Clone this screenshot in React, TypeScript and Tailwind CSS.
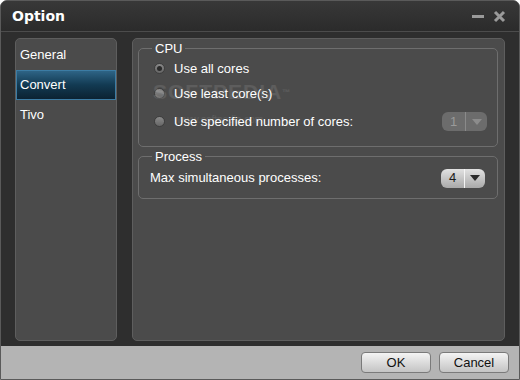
import { useState } from 'react'

const font = { fontFamily: '"Liberation Sans", Arial, sans-serif' }

const navItems = ['General', 'Convert', 'Tivo']

function Radio({ checked }: { checked?: boolean }) {
  return (
    <span className="flex h-[11px] w-[11px] items-center justify-center rounded-full border border-[#3e3e3e] bg-gradient-to-b from-[#8a8a8a] to-[#666]">
      {checked && <span className="h-[5px] w-[5px] rounded-full bg-[#2a2a2a]" />}
    </span>
  )
}

function Dropdown({ value, disabled }: { value: string; disabled?: boolean }) {
  return (
    <div
      className={
        disabled
          ? 'flex h-[19px] w-[45px] overflow-hidden rounded-[6px] bg-[#6c6c6c] text-[13px] text-[#9a9a9a]'
          : 'flex h-[19px] w-[44px] overflow-hidden rounded-[6px] bg-gradient-to-b from-[#e2e2e2] to-[#a9a9a9] text-[13px] text-[#1a1a1a]'
      }
    >
      <span className="flex w-[23px] items-center justify-center">{value}</span>
      <span className={disabled ? 'w-px bg-[#8a8a8a]' : 'w-px bg-[#f4f4f4]'} />
      <span className="flex flex-1 items-center justify-center">
        <svg width="10" height="6" viewBox="0 0 10 6">
          <path d="M0 0h10L5 6z" fill={disabled ? '#8c8c8c' : '#2a2a2a'} />
        </svg>
      </span>
    </div>
  )
}

export default function App() {
  const [active, setActive] = useState('Convert')
  const [cores, setCores] = useState(0)

  return (
    <div style={font} className="relative flex h-[380px] w-[520px] flex-col overflow-hidden rounded-t-[7px] border border-[#5a5a5a] bg-[#2e2e2e] select-none">
      {/* Title bar */}
      <div className="flex h-[31px] shrink-0 items-center border-b border-[#4c4c4c] bg-gradient-to-b from-[#383838] to-[#2b2b2b] pl-[11px] pr-[13px]">
        <span style={{ fontFamily: '"DejaVu Sans", sans-serif' }} className="text-[14px] font-bold text-white">Option</span>
        <div className="ml-auto flex items-center gap-[9px]">
          <span className="mt-[1px] h-[3px] w-[12px] bg-[#9a9a9a]" />
          <svg width="13" height="13" viewBox="0 0 13 13">
            <path d="M2 2l9 9M11 2l-9 9" stroke="#9a9a9a" strokeWidth="3" />
          </svg>
        </div>
      </div>

      {/* Body */}
      <div className="flex flex-1 gap-[15px] pb-[5px] pl-[14px] pr-[14px] pt-[6px]">
        <div className="w-[102px] rounded-[5px] border border-[#5e5e5e] bg-[#4b4b4b] pt-[1px]">
          {navItems.map(n => (
            <div
              key={n}
              onClick={() => setActive(n)}
              className={
                n === active
                  ? 'flex h-[30px] items-center border border-[#3c7ca4] bg-gradient-to-b from-[#2e6486] via-[#123a52] to-[#0b2232] pl-[3px] text-[13px] text-white'
                  : 'flex h-[30px] items-center pl-[4px] text-[13px] text-white'
              }
            >
              {n}
            </div>
          ))}
        </div>

        <div className="flex flex-1 flex-col gap-[2px] rounded-[5px] border border-[#5e5e5e] bg-[#4b4b4b] pl-[5px] pr-[6px] pt-[2px]">
          <fieldset className="rounded-[5px] border border-[#6e6e6e] pb-[9px] pl-[15px] pr-[10px]">
            <legend className="-ml-[2px] px-[3px] text-[13px] leading-[15px] text-white">CPU</legend>
            <div className="flex flex-col">
              {['Use all cores', 'Use least core(s)', 'Use specified number of cores:'].map((t, i) => (
                <div key={t} onClick={() => setCores(i)} className={i === 2 ? 'flex h-[31px] items-center gap-[9px] text-[13px] text-white' : 'flex h-[25px] items-center gap-[9px] text-[13px] text-white'}>
                  <Radio checked={cores === i} />
                  <span>{t}</span>
                  {i === 2 && (
                    <div className="ml-auto">
                      <Dropdown value="1" disabled={cores !== 2} />
                    </div>
                  )}
                </div>
              ))}
            </div>
          </fieldset>

          <fieldset className="rounded-[5px] border border-[#6e6e6e] pb-[6px] pl-[11px] pr-[12px]">
            <legend className="ml-[2px] px-[3px] text-[13px] leading-[15px] text-white">Process</legend>
            <div className="flex h-[28px] items-center text-[13px] text-white">
              <span>Max simultaneous processes:</span>
              <div className="ml-auto">
                <Dropdown value="4" />
              </div>
            </div>
          </fieldset>
        </div>
      </div>

      {/* Footer */}
      <div className="flex h-[33px] shrink-0 items-center justify-end gap-[8px] bg-[#b4b4b4] pr-[10px]">
        <button className="h-[21px] w-[70px] rounded-[4px] border border-[#7a7a7a] bg-gradient-to-b from-[#f4f4f4] to-[#c4c4c4] text-[13px] text-[#111]">OK</button>
        <button className="h-[21px] w-[70px] rounded-[4px] border border-[#7a7a7a] bg-gradient-to-b from-[#f4f4f4] to-[#c4c4c4] text-[13px] text-[#111]">Cancel</button>
      </div>

      {/* watermark */}
      <div className="pointer-events-none absolute left-[152px] top-[80px] text-[21px] font-bold leading-[22px] tracking-[1px] text-white/10">
        SOFTPEDIA<sup className="text-[8px]">™</sup>
      </div>
      <div className="pointer-events-none absolute left-[176px] top-[113px] text-[10px] leading-[11px] text-white/10">www.softpedia.com</div>
    </div>
  )
}
